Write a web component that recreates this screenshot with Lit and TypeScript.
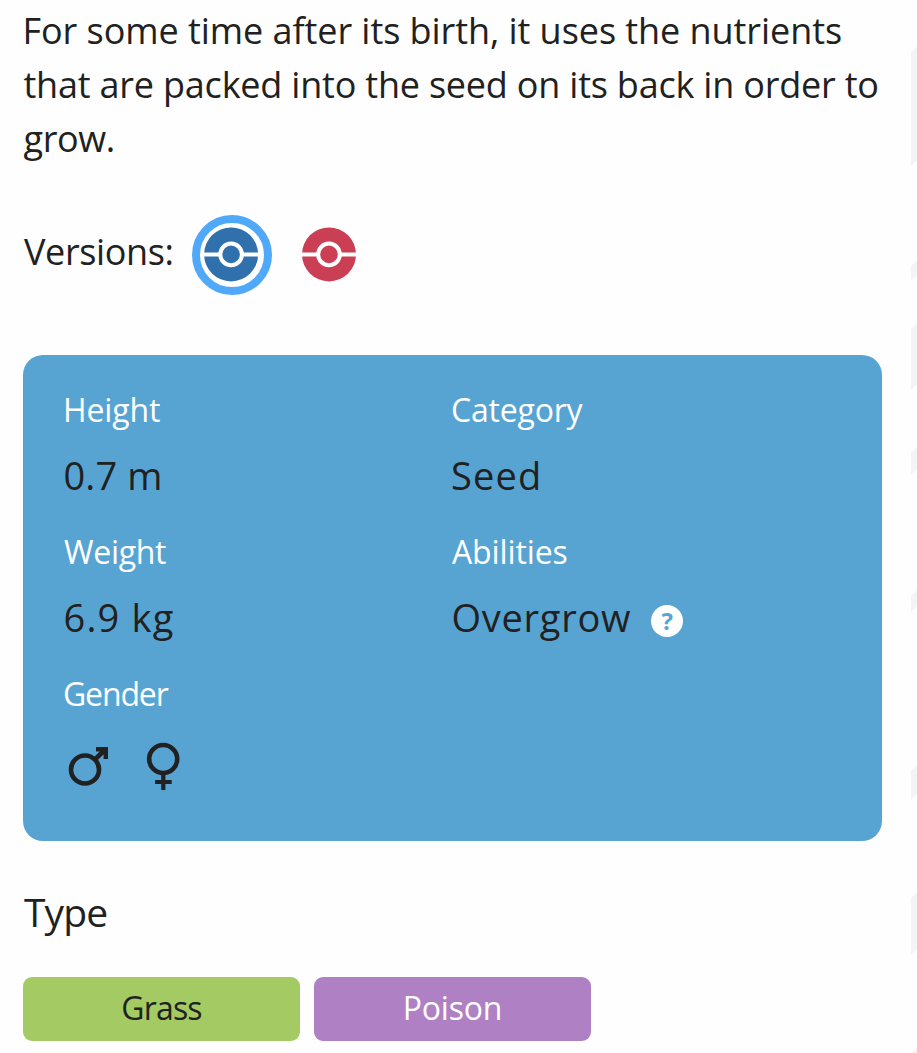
import { LitElement, html, css, svg } from "lit";
import { customElement, property } from "lit/decorators.js";

interface Copy {
  text: string;
  spacing: number;
  shift: number;
}

const copy = (text: string, spacing = 0, shift = 0): Copy => ({ text, spacing, shift });

const renderCopy = (c: Copy) =>
  html`<span style="letter-spacing:${c.spacing}px;margin-left:${c.shift}px">${c.text}</span>`;

@customElement("version-ball")
class VersionBall extends LitElement {
  @property() color = "#3070ad";
  @property({ type: Boolean }) selected = false;
  @property({ type: Number }) cx = 40;

  static styles = css`
    :host { display: block; width: 80px; height: 80px; }
    svg { display: block; }
  `;

  render() {
    return html`<svg width="80" height="80" viewBox="0 0 80 80">
      ${this.selected ? svg`<circle cx="40" cy="40" r="36" fill="#fff" stroke="#50a9f8" stroke-width="8"/>` : ""}
      <circle cx=${this.cx} cy="39.4" r="27" fill=${this.color} />
      <path d="M${this.cx - 28} 39.4h56" stroke="#fff" stroke-width="4" />
      <circle cx=${this.cx} cy="39.4" r="10.8" fill=${this.color} stroke="#fff" stroke-width="4" />
    </svg>`;
  }
}

@customElement("app-root")
class AppRoot extends LitElement {
  static styles = css`
    :host {
      display: block;
      position: relative;
      box-sizing: border-box;
      height: 1053px;
      padding: 4px 35px 0 23px;
      overflow: hidden;
      background: #fefefe;
      color: #212121;
      font-family: "Open Sans", "Noto Sans", sans-serif;
    }
    span { display: inline-block; white-space: pre; }
    .stripes { position: absolute; top: 0; right: 0; }
    .description { margin: 0; font-size: 36px; line-height: 54px; }
    .description span { display: block; }
    .versions { display: flex; align-items: center; height: 80px; margin-top: 49px; font-size: 36px; }
    .versions .label { width: 169px; margin-bottom: 6px; line-height: 54px; }
    .balls { display: flex; gap: 17px; }
    .card {
      display: grid;
      grid-template-columns: 388px 1fr;
      box-sizing: border-box;
      height: 486px;
      margin-top: 60px;
      padding: 31px 20px 0 41px;
      border-radius: 20px;
      background: #57a4d3;
    }
    .column { display: flex; flex-direction: column; gap: 26px; }
    .name { color: #fff; font-size: 32px; line-height: 48px; }
    .value { display: flex; align-items: center; margin-top: 14px; height: 54px; font-size: 38px; line-height: 54px; }
    .help {
      width: 32px;
      height: 32px;
      margin: 8px 0 0 20px;
      border-radius: 50%;
      background: #fff;
      color: #57a4d3;
      font-size: 24px;
      font-weight: 700;
      line-height: 31px;
      text-align: center;
    }
    .gender { display: block; margin-top: 20px; }
    h3 { margin: 44px 0 0; font-size: 39px; font-weight: 400; line-height: 54px; }
    .types { display: flex; gap: 14px; margin-top: 38px; }
    .type {
      width: 277px;
      height: 64px;
      border-radius: 9px;
      font-size: 32px;
      line-height: 62px;
      text-align: center;
    }
    .grass { background: #a4cb63; }
    .poison { background: #b080c4; color: #fff; }
  `;

  private field(name: Copy, value: unknown) {
    return html`<div><div class="name">${renderCopy(name)}</div>${value}</div>`;
  }

  render() {
    const stripes = [[52.5, 166], [266, 281], [329, 390], [453, 475], [596, 612], [771, 800], [898, 955], [1053, 1060]];
    return html`
      <svg class="stripes" width="6" height="1053">
        ${stripes.map(([a, b]) => svg`<path fill="#f4f4f4" d="M0 ${a}L6 ${a - 6}V${b - 6}L0 ${b}Z"/>`)}
      </svg>
      <p class="description">
        ${[
          copy("For some time after its birth, it uses the nutrients", -0.06, -0.5),
          copy("that are packed into the seed on its back in order to", -0.21, 0.5),
          copy("grow.", -0.4, 0.5),
        ].map(renderCopy)}
      </p>
      <div class="versions">
        <div class="label">${renderCopy(copy("Versions:", -0.38, 1))}</div>
        <div class="balls">
          <version-ball selected color="#3070ad" .cx=${39.1}></version-ball>
          <version-ball color="#cb3f55" .cx=${40}></version-ball>
        </div>
      </div>
      <section class="card">
        <div class="column">
          ${this.field(copy("Height", -0.13, -1), html`<div class="value">${renderCopy(copy("0.7 m", 0.1, -0.5))}</div>`)}
          ${this.field(copy("Weight", -0.3, 0), html`<div class="value">${renderCopy(copy("6.9 kg", 1.2, -0.5))}</div>`)}
          ${this.field(copy("Gender", -1.15, -1), html`<svg class="gender" width="120" height="60" viewBox="64 738 120 60">
            <g fill="none" stroke="#212121">
              <circle cx="85" cy="769.5" r="14" stroke-width="4.6" />
              <path d="M95 759.5L105.5 749" stroke-width="4.6" />
              <path d="M96 749.2h9.8v9.8" stroke-width="4.4" />
              <path d="M100 751h4v4Z" fill="#212121" stroke="none" />
              <circle cx="163.2" cy="759" r="14" stroke-width="4.6" />
              <path d="M163.3 774v16M155.1 782h16.6" stroke-width="4.2" />
            </g>
          </svg>`)}
        </div>
        <div class="column">
          ${this.field(copy("Category", -0.2, -1), html`<div class="value">${renderCopy(copy("Seed", 1.2, -1))}</div>`)}
          ${this.field(copy("Abilities", -0.12, 0), html`<div class="value">${renderCopy(copy("Overgrow", 0.75, -0.6))}<div class="help">?</div></div>`)}
        </div>
      </section>
      <h3>${renderCopy(copy("Type", -0.9, 1))}</h3>
      <div class="types">
        <div class="type grass">${renderCopy(copy("Grass", -0.84))}</div>
        <div class="type poison">${renderCopy(copy("Poison", -0.2))}</div>
      </div>
    `;
  }
}
